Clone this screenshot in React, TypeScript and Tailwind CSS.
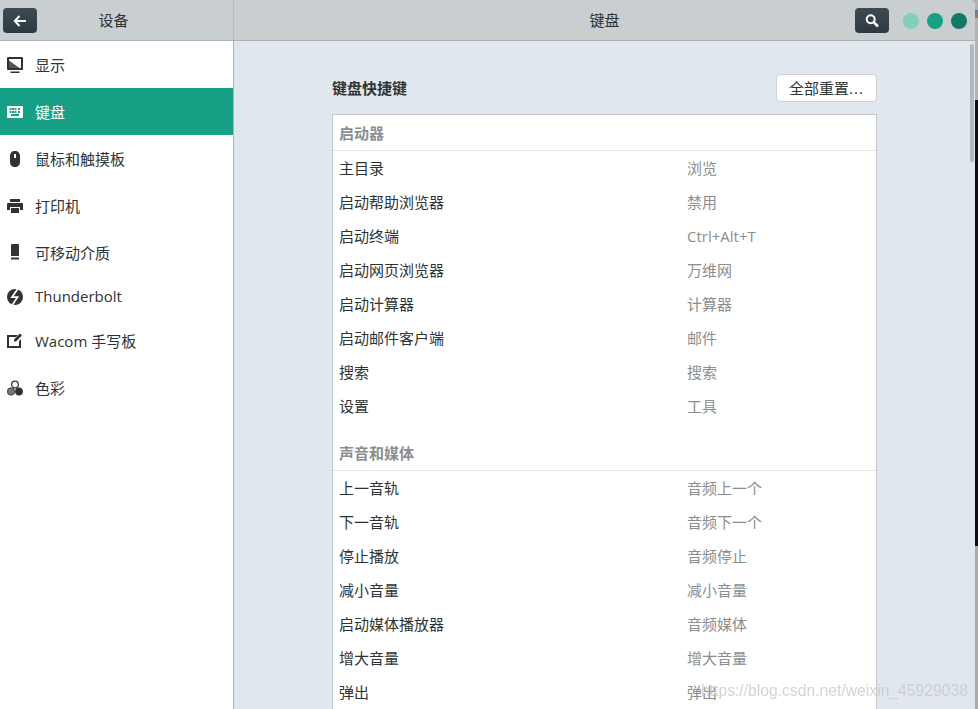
import React from "react";

type Shortcut = { name: string; keys: string };

const launchers: Shortcut[] = [
  { name: "主目录", keys: "浏览" },
  { name: "启动帮助浏览器", keys: "禁用" },
  { name: "启动终端", keys: "Ctrl+Alt+T" },
  { name: "启动网页浏览器", keys: "万维网" },
  { name: "启动计算器", keys: "计算器" },
  { name: "启动邮件客户端", keys: "邮件" },
  { name: "搜索", keys: "搜索" },
  { name: "设置", keys: "工具" },
];

const media: Shortcut[] = [
  { name: "上一音轨", keys: "音频上一个" },
  { name: "下一音轨", keys: "音频下一个" },
  { name: "停止播放", keys: "音频停止" },
  { name: "减小音量", keys: "减小音量" },
  { name: "启动媒体播放器", keys: "音频媒体" },
  { name: "增大音量", keys: "增大音量" },
  { name: "弹出", keys: "弹出" },
];

const DisplayIcon = () => (
  <svg width="16" height="16" viewBox="0 0 16 16" fill="currentColor">
    <path
      fillRule="evenodd"
      d="M1 0h14a1 1 0 0 1 1 1v11a1 1 0 0 1-1 1H1a1 1 0 0 1-1-1V1a1 1 0 0 1 1-1zm1 2v9h12V2z"
    />
    <path d="M2 3.5 12.5 11H2z" fill="#555" />
    <rect x="3.5" y="14.5" width="9" height="1.5" />
  </svg>
);

const KeyboardIcon = () => (
  <svg width="16" height="16" viewBox="0 0 16 16" fill="currentColor">
    <path
      fillRule="evenodd"
      d="M1 2h14a1 1 0 0 1 1 1v10a1 1 0 0 1-1 1H1a1 1 0 0 1-1-1V3a1 1 0 0 1 1-1zm1.5 2v2h2V4zm2.5 0v2h2V4zm2.5 0v2h2V4zM11 4v2h2V4zM2.5 7v2h2V7zM5 7v2h2V7zm2.5 0v2h2V7zM11 7v2h2V7zM4 10v2h8v-2z"
    />
  </svg>
);

const MouseIcon = () => (
  <svg width="16" height="16" viewBox="0 0 16 16" fill="currentColor">
    <path
      fillRule="evenodd"
      d="M8 0c3 0 5 2 5 5v6c0 3-2 5-5 5s-5-2-5-5V5c0-3 2-5 5-5zM7 3v4h2V3z"
    />
  </svg>
);

const PrinterIcon = () => (
  <svg width="16" height="16" viewBox="0 0 16 16" fill="currentColor">
    <rect x="3" y="1" width="10" height="3" />
    <path d="M1 5h14a1 1 0 0 1 1 1v6h-3V9H3v3H0V6a1 1 0 0 1 1-1z" />
    <rect x="4" y="10" width="8" height="5" />
  </svg>
);

const RemovableIcon = () => (
  <svg width="16" height="16" viewBox="0 0 16 16" fill="currentColor">
    <path d="M5 0h6a1 1 0 0 1 1 1v11H4V1a1 1 0 0 1 1-1z" />
    <rect x="4" y="13.5" width="8" height="2" />
  </svg>
);

const BoltIcon = () => (
  <svg width="16" height="16" viewBox="0 0 16 16">
    <circle cx="8" cy="8" r="8" fill="currentColor" />
    <path d="M11 -0.5 5 8.2h5.5L5 16.5" fill="none" stroke="#fff" strokeWidth="1.7" />
  </svg>
);

const TabletIcon = () => (
  <svg width="16" height="16" viewBox="0 0 16 16" fill="currentColor">
    <path d="M0 2h11l-2 2H2v9h10V8l2-2v9H0z" />
    <path d="M13 0.5l2 2-6 6H7v-2z" />
  </svg>
);

const ColorIcon = () => (
  <svg width="16" height="16" viewBox="0 0 16 16">
    <circle cx="8" cy="4.5" r="3.4" fill="#fff" stroke="#2e3436" strokeWidth="1.2" />
    <circle cx="4" cy="11.5" r="3.7" fill="#777" stroke="#2e3436" strokeWidth="0.8" />
    <circle cx="12" cy="11.5" r="3.9" fill="#2e3436" />
  </svg>
);

const nav = [
  { label: "显示", icon: <DisplayIcon />, h: "h-[47px]", text: "pt-[2px]" },
  { label: "键盘", icon: <KeyboardIcon />, h: "h-[47px]", text: "pt-[2px]", active: true },
  { label: "鼠标和触摸板", icon: <MouseIcon />, h: "h-[47px]", text: "pt-[2px]" },
  { label: "打印机", icon: <PrinterIcon />, h: "h-[47px]", text: "pt-[2px]" },
  { label: "可移动介质", icon: <RemovableIcon />, h: "h-[46px]", text: "pt-[2px]" },
  { label: "Thunderbolt", icon: <BoltIcon />, h: "h-[43px]", text: "" },
  { label: "Wacom 手写板", icon: <TabletIcon />, h: "h-[46px]", text: "" },
  { label: "色彩", icon: <ColorIcon />, h: "h-[48px]", text: "" },
];

const Row = ({ item }: { item: Shortcut }) => (
  <div className="flex h-[34px] items-center pl-[6px]">
    <span className="w-[348px] text-[#2e3436]">{item.name}</span>
    <span className="text-[#8b8e8f]">{item.keys}</span>
  </div>
);

const SectionHead = ({ title }: { title: string }) => (
  <div className="flex h-[36px] items-center border-b border-[#e4e6e6] pl-[6px] pt-[2px] font-bold text-[#8b8e8f]">
    {title}
  </div>
);

export default function App() {
  return (
    <div className="flex h-[709px] w-[978px] overflow-hidden bg-[#b0b4b4] font-['Open_Sans','Noto_Sans_CJK_SC',sans-serif] text-[15px]">
      <div className="flex w-[975px] shrink-0 flex-col overflow-hidden rounded-tr-[6px] bg-[#e1e7ee]">
        <header className="relative flex h-[41px] shrink-0 items-center border-b border-[#aeb2b2] bg-[#c9cfd1] text-[#2e3436]">
          <div className="relative flex h-full w-[234px] shrink-0 items-center justify-center border-r border-[#b6bbbb]">
            <button className="absolute left-[3px] top-[8px] flex h-[25px] w-[34px] items-center justify-center rounded-[4px] bg-gradient-to-b from-[#3d4a52] to-[#2d3a41] text-white">
              <svg width="16" height="16" viewBox="0 0 16 16" fill="none" stroke="currentColor" strokeWidth="2">
                <path d="M14 8H3M7.5 3 2.8 8l4.7 5" />
              </svg>
            </button>
            <span className="pr-[6px]">设备</span>
          </div>
          <div className="flex-1 text-center">键盘</div>
          <div className="absolute right-[8px] top-[8px] flex items-center">
            <button className="mr-[14px] flex h-[25px] w-[34px] items-center justify-center rounded-[4px] bg-gradient-to-b from-[#3d4a52] to-[#2d3a41] text-white">
              <svg width="16" height="16" viewBox="0 0 16 16" fill="none" stroke="currentColor">
                <circle cx="6.7" cy="6.2" r="4" strokeWidth="2" />
                <path d="m9.7 9.2 4.3 4.3" strokeWidth="2.6" />
              </svg>
            </button>
            <span className="h-4 w-4 rounded-full bg-[#83cfbc]" />
            <span className="ml-2 h-4 w-4 rounded-full bg-[#16a085]" />
            <span className="ml-2 h-4 w-4 rounded-full bg-[#107a64]" />
          </div>
        </header>
        <div className="flex min-h-0 flex-1">
          <aside className="w-[234px] shrink-0 border-r border-[#aeb2b2] bg-white text-[#2e3436]">
            {nav.map((n) => (
              <div
                key={n.label}
                className={`flex items-center pl-[7px] ${n.h} ${n.active ? "bg-[#16a085] text-white" : ""}`}
              >
                <span className="flex h-4 w-[28px] items-center">{n.icon}</span>
                <span className={n.text}>{n.label}</span>
              </div>
            ))}
          </aside>
          <main className="relative min-w-0 flex-1 pl-[98px] pr-[98px] pt-[32px]">
            <div className="flex h-[29px] items-center justify-between">
              <h2 className="pt-[2px] font-bold text-[#2e3436]">键盘快捷键</h2>
              <button className="h-[28px] w-[101px] rounded-[4px] border border-[#cdd2d5] bg-white pt-[1px] text-[#2e3436]">
                全部重置<span className="tracking-[1px]">...</span>
              </button>
            </div>
            <div className="mt-[12px] h-[700px] border border-[#c1c7cb] bg-white">
              <SectionHead title="启动器" />
              {launchers.map((item) => (
                <Row key={item.name} item={item} />
              ))}
              <div className="mt-[12px]">
                <SectionHead title="声音和媒体" />
              </div>
              {media.map((item) => (
                <Row key={item.name} item={item} />
              ))}
            </div>
            <div className="absolute right-[1px] top-[3px] h-[118px] w-[4px] rounded-full bg-[#b2b7b9]" />
            <span className="absolute left-[467px] top-[638px] whitespace-nowrap font-['Liberation_Sans',sans-serif] text-[15.7px] text-[#c8c8c8]/80 blur-[0.4px]">
              https://blog.csdn.net/weixin_45929038
            </span>
          </main>
        </div>
      </div>
      <div className="flex w-[3px] shrink-0 flex-col">
        <div className="h-[100px] pt-[10px]">
          <div className="h-[8px] bg-gradient-to-b from-[#4a7fb0] to-[#b5703a]" />
        </div>
        <div className="h-[446px] bg-[#0c1012]" />
        <div className="flex-1 bg-[#aaaaaa]" />
      </div>
    </div>
  );
}
